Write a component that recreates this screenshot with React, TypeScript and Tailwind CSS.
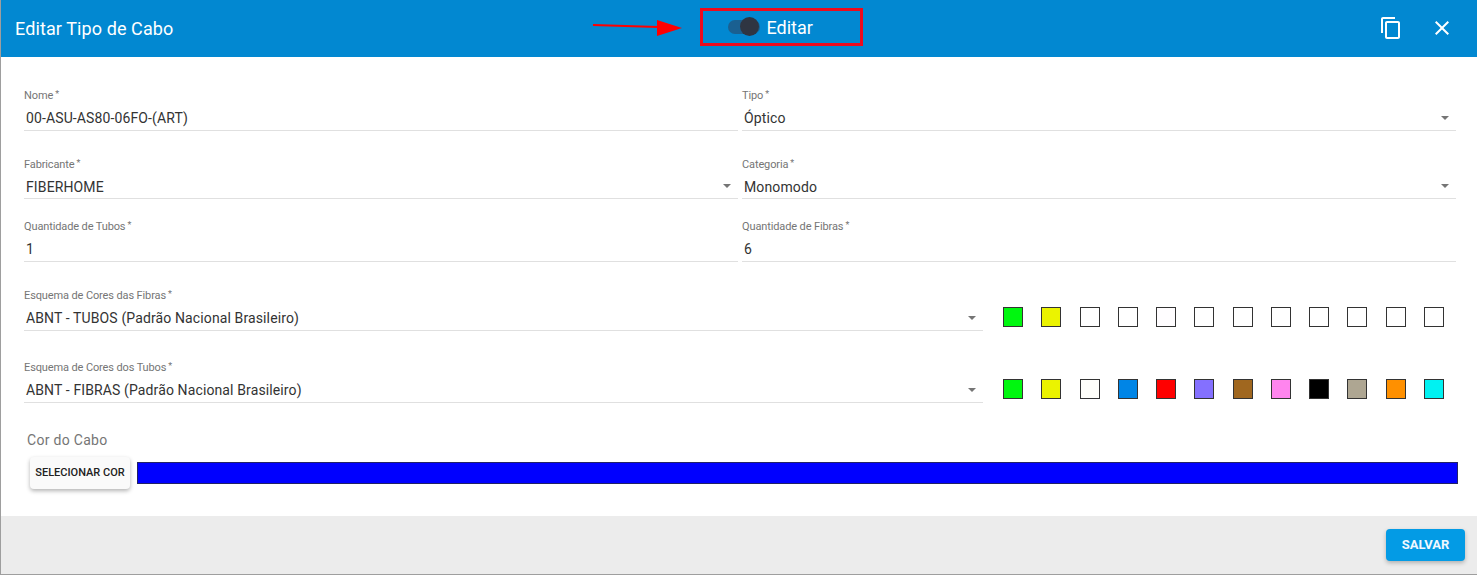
const fibras = ["#00f70f", "#ebf300", "#ffffff", "#ffffff", "#fffdff", "#ffffff", "#ffffff", "#ffffff", "#ffffff", "#ffffff", "#ffffff", "#ffffff"];
const tubos = ["#00f70f", "#ebf300", "#fffffa", "#0085e6", "#ff0000", "#8470ff", "#a0671f", "#ff85ee", "#000000", "#aea692", "#ff9000", "#00f2f2"];

function Caret() {
  return <span className="absolute right-[7px] bottom-[10px] h-0 w-0 border-x-[4px] border-t-[4px] border-x-transparent border-t-[#757575]" />;
}

function Field({ label, value, select, className }: { label: string; value: string; select?: boolean; className?: string }) {
  return (
    <div className={"relative border-b border-[#e0e0e0] " + (className ?? "")}>
      <div className="h-[13px] text-[11px] leading-[15px] tracking-[-0.12px] text-[#757575]">
        {label}
        <span className="relative -top-[2px] ml-[2px] text-[9px]">*</span>
      </div>
      <div className="mt-[8px] h-[21px] pl-[2px] text-[14px] leading-[18px] tracking-[0.12px] text-[#333333]">{value}</div>
      {select && <Caret />}
    </div>
  );
}

function Swatches({ colors }: { colors: string[] }) {
  return (
    <div className="ml-[20px] flex gap-[18.25px]">
      {colors.map((c, i) => (
        <div key={i} className="h-[20px] w-[20px] border border-[#333333]" style={{ backgroundColor: c }} />
      ))}
    </div>
  );
}

export default function App() {
  return (
    <div className="flex h-[575px] w-[1477px] flex-col overflow-hidden border-b border-l border-[#9e9e9e] bg-white font-['Roboto',sans-serif]">
      <div className="relative flex h-[57px] shrink-0 items-center bg-[#0288d1] pl-[14px] pr-[23px] text-white">
        <span className="text-[18px] tracking-[0.1px]">Editar Tipo de Cabo</span>
        <svg className="absolute left-[591px] top-[17px]" width="92" height="20" viewBox="0 0 92 20">
          <path d="M1 8 L66 10" stroke="#ff0000" strokeWidth="2" />
          <path d="M65 3 L90 11 L65 19 Z" fill="#ff0000" />
        </svg>
        <div className="absolute left-[699px] top-[8px] flex h-[38px] w-[163px] items-center border-[3px] border-[#ee0a1c] pl-[25px]">
          <div className="relative h-[14px] w-[32px] rounded-full bg-[#1a6091]">
            <div className="absolute -top-[3px] left-[12px] h-[19px] w-[19px] rounded-full bg-[#2f3542]" />
          </div>
          <span className="ml-[6.5px] text-[18px]">Editar</span>
        </div>
        <div className="mb-[1px] ml-auto flex items-center gap-[27px]">
          <svg width="24" height="24" viewBox="0 0 24 24" fill="currentColor">
            <path d="M16 1H4c-1.1 0-2 .9-2 2v14h2V3h12V1zm3 4H8c-1.1 0-2 .9-2 2v14c0 1.1.9 2 2 2h11c1.1 0 2-.9 2-2V7c0-1.1-.9-2-2-2zm0 16H8V7h11v14z" />
          </svg>
          <svg width="24" height="24" viewBox="0 0 24 24" fill="currentColor">
            <path d="M19 6.41L17.59 5 12 10.59 6.41 5 5 6.41 10.59 12 5 17.59 6.41 19 12 13.41 17.59 19 19 17.59 13.41 12z" />
          </svg>
        </div>
      </div>

      <div className="flex-1 pl-[23px] pr-[21px] pt-[31px]">
        <div className="grid grid-cols-2 gap-x-[4px]">
          <Field label="Nome" value="00-ASU-AS80-06FO-(ART)" />
          <Field label="Tipo" value="Óptico" select />
          <Field className="mt-[26px] h-[42px]" label="Fabricante" value="FIBERHOME" select />
          <Field className="mt-[26px] h-[42px]" label="Categoria" value="Monomodo" select />
          <Field className="mt-[20px]" label="Quantidade de Tubos" value="1" />
          <Field className="mt-[20px]" label="Quantidade de Fibras" value="6" />
        </div>

        <div className="mt-[26px] flex items-start">
          <Field className="w-[959px]" label="Esquema de Cores das Fibras" value="ABNT - TUBOS (Padrão Nacional Brasileiro)" select />
          <div className="pt-[19px]">
            <Swatches colors={fibras} />
          </div>
        </div>
        <div className="mt-[29px] flex items-start">
          <Field className="w-[959px]" label="Esquema de Cores dos Tubos" value="ABNT - FIBRAS (Padrão Nacional Brasileiro)" select />
          <div className="pt-[19px]">
            <Swatches colors={tubos} />
          </div>
        </div>

        <div className="mt-[28px] pl-[3px] text-[14px] leading-[18px] tracking-[0.3px] text-[#757575]">Cor do Cabo</div>
        <div className="mt-[8px] flex items-center pl-[6px]">
          <button className="h-[32px] w-[100px] rounded-[4px] bg-[#fafafa] text-center text-[11px] font-medium text-[#212121] shadow-[0_2px_4px_rgba(0,0,0,0.3)]">
            SELECIONAR COR
          </button>
          <div className="-mr-[2px] ml-[7px] h-[22px] flex-1 border border-[#222266] bg-[#0000ff]" />
        </div>
      </div>

      <div className="flex h-[58px] shrink-0 items-start justify-end bg-[#ececec] pr-[12px] pt-[13px]">
        <button className="h-[32px] w-[79px] rounded-[4px] bg-[#039be5] text-[13px] font-bold text-[#f0f8ff] shadow-[0_2px_4px_rgba(0,0,0,0.25)]">
          SALVAR
        </button>
      </div>
    </div>
  );
}
